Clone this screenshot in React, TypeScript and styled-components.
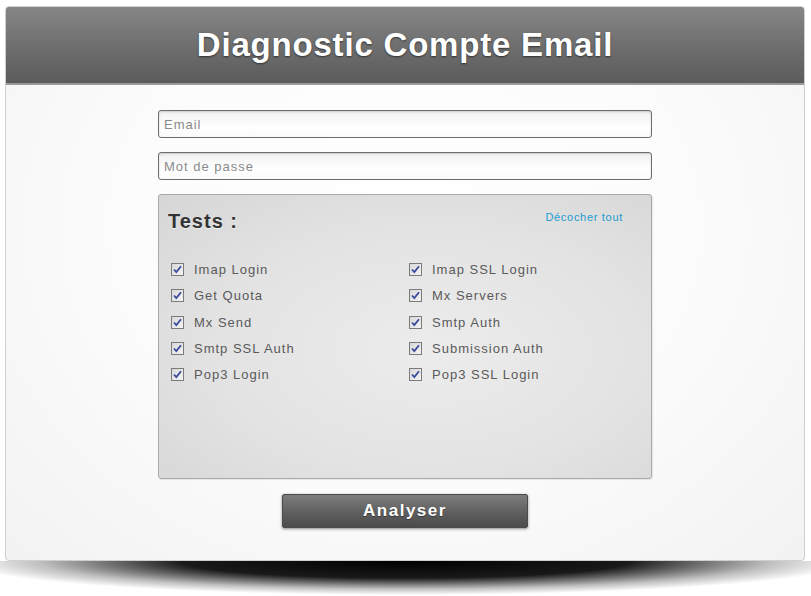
import React, { useState } from 'react';
import styled, { createGlobalStyle } from 'styled-components';

const GlobalStyle = createGlobalStyle`
    html, body {
        margin: 0;
        padding: 0;
        background: #ffffff;
        font-family: "Liberation Sans", Arial, sans-serif;
    }
`;

const Page = styled.div`
    width: 811px;
    height: 596px;
    padding: 6px 6px 0 5px;
    box-sizing: border-box;
    overflow: hidden;
`;

const Card = styled.div`
    position: relative;
    z-index: 1;
    border: 1px solid #cfcfcf;
    border-radius: 4px;
    background: radial-gradient(ellipse at 50% 40%, #ffffff 0%, #fbfbfb 55%, #f2f2f2 100%);
    height: 555px;
    box-sizing: border-box;
    display: flex;
    flex-direction: column;
    overflow: hidden;
`;

const Header = styled.div`
    height: 78px;
    background: linear-gradient(to bottom, #868686 0%, #6f6f6f 50%, #5b5b5b 100%);
    border-bottom: 2px solid #9a9a9a;
    display: flex;
    align-items: center;
    justify-content: center;
    box-sizing: border-box;
`;

const Title = styled.h1`
    margin: 0;
    color: #ffffff;
    font-size: 33px;
    font-weight: bold;
    letter-spacing: 0.8px;
    text-shadow: 0 1px 2px rgba(0, 0, 0, 0.55);
`;

const Form = styled.div`
    width: 494px;
    margin: 25px auto 0;
    display: flex;
    flex-direction: column;
`;

const Input = styled.input`
    height: 28px;
    box-sizing: border-box;
    border: 1px solid #6d6d6d;
    border-radius: 3px;
    padding: 0 5px;
    margin-bottom: 14px;
    background: linear-gradient(to bottom, #f0f0f0 0%, #ffffff 60%, #fafafa 100%);
    box-shadow: inset 0 1px 2px rgba(0, 0, 0, 0.15);
    font-family: "Liberation Sans", Arial, sans-serif;
    font-size: 13px;
    letter-spacing: 1px;
    color: #555;
    outline: none;

    &::placeholder {
        color: #8a8a8a;
    }
`;

const Panel = styled.div`
    height: 285px;
    box-sizing: border-box;
    border: 1px solid #a9a9a9;
    border-radius: 3px;
    background: radial-gradient(ellipse at 55% 55%, #ececec 0%, #e3e3e3 55%, #d6d6d6 100%);
    box-shadow: 1px 1px 1px rgba(0, 0, 0, 0.08);
    padding: 15px 28px 0 9px;
`;

const PanelHead = styled.div`
    display: flex;
    justify-content: space-between;
    align-items: flex-start;
`;

const PanelTitle = styled.h2`
    margin: 0;
    font-size: 20px;
    font-weight: bold;
    letter-spacing: 1px;
    color: #333;
    text-shadow: 0 1px 0 rgba(255, 255, 255, 0.6);
`;

const ToggleLink = styled.a`
    margin-top: 1px;
    font-size: 11px;
    letter-spacing: 0.7px;
    color: #1b9bd0;
    text-decoration: none;
    cursor: pointer;
`;

const Grid = styled.div`
    display: grid;
    grid-template-columns: 238px 1fr;
    row-gap: 9.25px;
    margin-top: 28px;
    padding-left: 3px;
`;

const Item = styled.label`
    display: flex;
    align-items: center;
    height: 17px;
    font-size: 13px;
    letter-spacing: 1px;
    color: #5a5a5a;
    cursor: pointer;
`;

const Box = styled.span`
    width: 11px;
    height: 11px;
    border: 1px solid #7b7b7b;
    background: linear-gradient(135deg, #d8d8d8 0%, #f4f4f4 100%);
    display: inline-flex;
    align-items: center;
    justify-content: center;
    margin-right: 10px;
    flex-shrink: 0;
`;

const Footer = styled.div`
    display: flex;
    justify-content: center;
    margin-top: 15px;
`;

const Button = styled.button`
    width: 246px;
    height: 34px;
    border: 1px solid #4a4a4a;
    border-radius: 2px;
    background: linear-gradient(to bottom, #7d7d7d 0%, #5f5f5f 55%, #4b4b4b 100%);
    box-shadow: 0 1px 3px rgba(0, 0, 0, 0.45);
    color: #ffffff;
    font-family: "Liberation Sans", Arial, sans-serif;
    font-size: 17px;
    font-weight: bold;
    letter-spacing: 1.5px;
    text-shadow: 0 1px 1px rgba(0, 0, 0, 0.4);
    cursor: pointer;
`;

const Shadow = styled.div`
    height: 34px;
    margin: 0 -6px 0 -5px;
    background: radial-gradient(ellipse 55% 100% at 50% 0%, #000 0%, rgba(0, 0, 0, 0.9) 50%, rgba(0, 0, 0, 0.25) 82%, rgba(0, 0, 0, 0) 100%);
`;

const tests = [
    ['Imap Login', 'Imap SSL Login'],
    ['Get Quota', 'Mx Servers'],
    ['Mx Send', 'Smtp Auth'],
    ['Smtp SSL Auth', 'Submission Auth'],
    ['Pop3 Login', 'Pop3 SSL Login'],
].flat();

const Check = ({ on }: { on: boolean }) => (
    <Box>
        {on && (
            <svg width="9" height="9" viewBox="0 0 9 9">
                <path d="M1 4.5 L3.3 7 L8 1.2" fill="none" stroke="#3a4a9c" strokeWidth="1.8" />
            </svg>
        )}
    </Box>
);

export default function App() {
    const [checked, setChecked] = useState<Record<string, boolean>>(
        Object.fromEntries(tests.map((t) => [t, true]))
    );

    const toggle = (name: string) => setChecked((c) => ({ ...c, [name]: !c[name] }));
    const uncheckAll = () => setChecked(Object.fromEntries(tests.map((t) => [t, false])));

    return (
        <>
            <GlobalStyle />
            <Page>
                <Card>
                    <Header>
                        <Title>Diagnostic Compte Email</Title>
                    </Header>
                    <Form>
                        <Input type="text" placeholder="Email" />
                        <Input type="password" placeholder="Mot de passe" />
                        <Panel>
                            <PanelHead>
                                <PanelTitle>Tests :</PanelTitle>
                                <ToggleLink onClick={uncheckAll}>Décocher tout</ToggleLink>
                            </PanelHead>
                            <Grid>
                                {tests.map((t) => (
                                    <Item key={t} onClick={() => toggle(t)}>
                                        <Check on={checked[t]} />
                                        {t}
                                    </Item>
                                ))}
                            </Grid>
                        </Panel>
                        <Footer>
                            <Button>Analyser</Button>
                        </Footer>
                    </Form>
                </Card>
                <Shadow />
            </Page>
        </>
    );
}
